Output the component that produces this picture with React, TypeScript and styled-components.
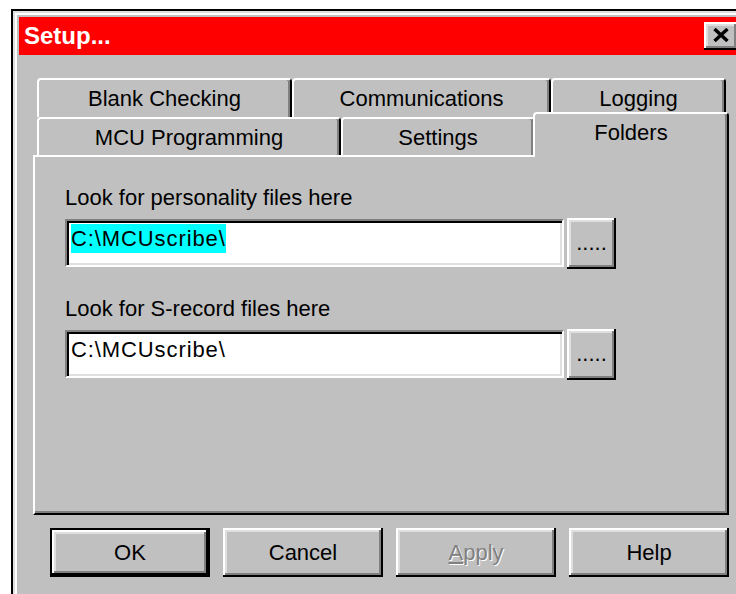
import React from 'react';
import styled, {createGlobalStyle} from 'styled-components';

const face = '#c0c0c0';
const shade = '#808080';
const light = '#dfdfdf';

const GlobalStyle = createGlobalStyle`
	html, body {
		margin: 0;
		padding: 0;
		background: #fff;
		overflow: hidden;
	}
	body {
		font-family: "Liberation Sans", Arial, sans-serif;
	}
`;

// Outer dialog frame, partly running off the right and bottom of the screen
const Window = styled.div`
	box-sizing: border-box;
	width: 737px;
	height: 600px;
	margin: 9px 0 0 11px;
	padding: 6px;
	background: ${face};
	border: 2px solid #000;
	box-shadow: inset 2px 2px 0 ${light}, inset 4px 4px 0 #fff;
	font-size: 22px;
	line-height: 25px;
	color: #000;
`;

const TitleBar = styled.div`
	display: flex;
	align-items: center;
	justify-content: space-between;
	height: 38px;
	padding: 0 2px 0 5px;
	background: #ff0000;
`;

const Title = styled.span`
	color: #fff;
	font-weight: bold;
	font-size: 24px;
	line-height: 28px;
`;

const raised = `
	box-shadow: inset -2px -2px 0 #000, inset 2px 2px 0 #fff,
		inset -4px -4px 0 ${shade}, inset 4px 4px 0 ${light};
`;

const CloseButton = styled.button`
	box-sizing: border-box;
	width: 34px;
	height: 28px;
	padding: 0 0 2px;
	display: flex;
	align-items: center;
	justify-content: center;
	background: ${face};
	border: none;
	${raised}
`;

const Body = styled.div`
	padding: 23px 0 0 14px;
`;

const TabStrip = styled.div`
	width: 696px;
`;

const TabRow = styled.div<{ $h: number }>`
	display: flex;
	align-items: flex-end;
	height: ${p => p.$h}px;
	padding-left: 4px;
`;

const Tab = styled.div<{ $w: number; $active?: boolean }>`
	box-sizing: border-box;
	flex: none;
	width: ${p => p.$w}px;
	height: ${p => (p.$active ? '45px' : '100%')};
	padding-top: 6px;
	text-align: center;
	white-space: nowrap;
	background: ${face};
	border-top: 2px solid #fff;
	border-left: 2px solid #fff;
	border-right: 2px solid #000;
	border-radius: 4px 4px 0 0;
	box-shadow: inset -2px 0 0 ${shade};
	${p => p.$active && `
		position: relative;
		z-index: 1;
		margin: 0 0 -2px -2px;
	`}
`;

const Panel = styled.div`
	box-sizing: border-box;
	height: 360px;
	padding: 28px 0 0 30px;
	border: 2px solid;
	border-color: #fff #000 #000 #fff;
	box-shadow: inset -2px -2px 0 ${shade};
`;

const FieldLabel = styled.div<{ $gap?: number }>`
	margin: ${p => p.$gap ?? 0}px 0 8px;
`;

const FieldRow = styled.div`
	display: flex;
	align-items: flex-start;
	height: 51px;
	gap: 3px;
`;

const TextBox = styled.div`
	box-sizing: border-box;
	width: 499px;
	height: 48px;
	margin-top: 1px;
	padding: 3px 0 0 4px;
	background: #fff;
	border: 2px solid;
	border-color: ${shade} #fff #fff ${shade};
	box-shadow: inset 2px 2px 0 #000, inset -2px -2px 0 ${light};
	line-height: 29px;
	letter-spacing: 0.9px;
	white-space: nowrap;
`;

const Selected = styled.span`
	display: inline-block;
	background: #00ffff;
	color: #000;
`;

const BrowseButton = styled.button`
	box-sizing: border-box;
	width: 49px;
	height: 51px;
	padding: 0 0 2px;
	font: inherit;
	color: #000;
	background: ${face};
	border: none;
	${raised}
`;

const ButtonBar = styled.div`
	display: flex;
	gap: 13px;
	margin-top: 13px;
	padding-left: 17px;
`;

const DialogButton = styled.button<{ $default?: boolean }>`
	box-sizing: border-box;
	width: 160px;
	height: 49px;
	padding: 0;
	font: inherit;
	color: #000;
	background: ${face};
	border: ${p => (p.$default ? '2px solid #000' : 'none')};
	${raised}

	&:disabled {
		color: ${shade};
		text-shadow: 1px 1px 0 #fff;
	}
`;

const CloseGlyph = () => (
	<svg width="16" height="14" viewBox="0 0 16 14">
		<path d="M1.5 1 L14.5 13 M14.5 1 L1.5 13" stroke="#000" strokeWidth="3.4"/>
	</svg>
);

const backRow = [
	{label: 'Blank Checking', w: 255},
	{label: 'Communications', w: 259},
	{label: 'Logging', w: 175},
];

const frontRow = [
	{label: 'MCU Programming', w: 304},
	{label: 'Settings', w: 194},
	{label: 'Folders', w: 196, active: true},
];

export default function App() {
	return (
		<>
			<GlobalStyle/>
			<Window>
				<TitleBar>
					<Title>Setup...</Title>
					<CloseButton aria-label="Close"><CloseGlyph/></CloseButton>
				</TitleBar>
				<Body>
					<TabStrip>
						<TabRow $h={39}>
							{backRow.map(t => <Tab key={t.label} $w={t.w}>{t.label}</Tab>)}
						</TabRow>
						<TabRow $h={38}>
							{frontRow.map(t => (
								<Tab key={t.label} $w={t.w} $active={t.active}>{t.label}</Tab>
							))}
						</TabRow>
						<Panel>
							<FieldLabel>Look for personality files here</FieldLabel>
							<FieldRow>
								<TextBox><Selected>C:\MCUscribe\</Selected></TextBox>
								<BrowseButton>.....</BrowseButton>
							</FieldRow>
							<FieldLabel $gap={27}>Look for S-record files here</FieldLabel>
							<FieldRow>
								<TextBox>C:\MCUscribe\</TextBox>
								<BrowseButton>.....</BrowseButton>
							</FieldRow>
						</Panel>
					</TabStrip>
					<ButtonBar>
						<DialogButton $default>OK</DialogButton>
						<DialogButton>Cancel</DialogButton>
						<DialogButton disabled><u>A</u>pply</DialogButton>
						<DialogButton>Help</DialogButton>
					</ButtonBar>
				</Body>
			</Window>
		</>
	);
}
